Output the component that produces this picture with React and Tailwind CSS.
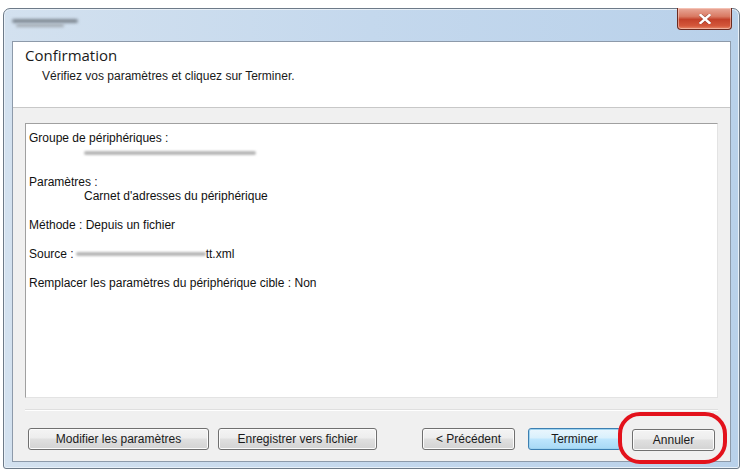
import React from "react";

const font = { fontFamily: "'Liberation Sans', Arial, sans-serif" };

function WinButton({ children, className = "", primary = false }) {
  return (
    <button
      className={`h-[22px] rounded-[3px] border text-[12px] text-[#1a1a1a] ${
        primary
          ? "border-[#3c7fb1] bg-[linear-gradient(#eaf6fd_0%,#d9f0fc_45%,#bee6fd_50%,#a7d9f5_100%)] shadow-[inset_0_0_0_1px_#9ed3f0]"
          : "border-[#707070] bg-[linear-gradient(#f4f4f4_0%,#ededed_45%,#e0e0e0_50%,#d3d3d3_100%)] shadow-[inset_0_0_0_1px_#fcfcfc]"
      } ${className}`}
      style={font}
    >
      {children}
    </button>
  );
}

function Blur({ className }) {
  return <span className={`inline-block h-[4px] rounded-full bg-[#b8b8b8] blur-[1.2px] ${className}`} />;
}

export default function App() {
  return (
    <div className="h-[470px] w-[743px] overflow-hidden bg-white pl-[3px] pt-[8px]">
      <div className="flex h-[461px] w-[737px] flex-col rounded-t-[7px] rounded-b-[3px] border border-[#6d7a88] bg-[linear-gradient(90deg,#d3e1ef_0%,#c4d8ed_50%,#b9d1ea_100%)] shadow-[inset_0_0_0_1px_#e8f0f8]">
        {/* title bar */}
        <div className="relative flex h-[32px] shrink-0 items-start">
          <div className="ml-[8px] mt-[10px] flex flex-col gap-[1px]">
            <span className="h-[4px] w-[66px] rounded-full bg-[#7f8993] blur-[1.5px]" />
            <span className="ml-[4px] h-[3px] w-[48px] rounded-full bg-[#a0a8b0] blur-[1.5px]" />
          </div>
          <div className="absolute right-[7px] top-[-1px] flex h-[22px] w-[55px] items-center justify-center rounded-b-[4px] border border-t-0 border-[#6b2a20] bg-[linear-gradient(#e9a99a_0%,#d97a63_40%,#c4412a_55%,#d4573b_85%,#e88a6a_100%)] shadow-[inset_0_0_0_1px_rgba(255,220,210,0.5)]">
            <svg width="12" height="10" viewBox="0 0 12 10">
              <path d="M1.5 1 L10.5 9 M10.5 1 L1.5 9" stroke="#5a1a12" strokeWidth="3.6" strokeLinecap="square" opacity="0.45" />
              <path d="M1.5 1 L10.5 9 M10.5 1 L1.5 9" stroke="#ffffff" strokeWidth="2.4" strokeLinecap="square" />
            </svg>
          </div>
        </div>

        {/* client area */}
        <div className="mx-[8px] flex h-[421px] flex-col border border-[#8d9aaa] bg-[#f0f0f0]">
          <div className="h-[66px] shrink-0 border-b border-[#c8c8c8] bg-white px-[12px] pt-[3px]" style={font}>
            <div className="text-[15px] leading-[20px] text-[#1a1a1a]" style={{ fontFamily: "'Open Sans', 'Liberation Sans', sans-serif" }}>
              Confirmation
            </div>
            <div className="ml-[17px] mt-[4px] text-[12px] leading-[14px] text-[#1a1a1a]">
              Vérifiez vos paramètres et cliquez sur Terminer.
            </div>
          </div>

          <div className="flex flex-1 flex-col px-[12px] pt-[15px]">
            <div className="h-[275px] border border-t-[#a0a0a0] border-l-[#a0a0a0] border-r-[#e3e3e3] border-b-[#e3e3e3] bg-white px-[3px] pt-[7px] text-[12px] leading-[14.5px] text-[#111]" style={font}>
              <div>Groupe de périphériques :</div>
              <div className="flex h-[14.5px] items-center pl-[55px]">
                <Blur className="w-[172px]" />
              </div>
              <div className="h-[14.5px]" />
              <div>Paramètres :</div>
              <div className="pl-[55px]">Carnet d'adresses du périphérique</div>
              <div className="h-[14.5px]" />
              <div>Méthode : Depuis un fichier</div>
              <div className="h-[14.5px]" />
              <div className="flex items-center">
                <span>Source :</span>
                <Blur className="ml-[2px] w-[130px]" />
                <span>tt.xml</span>
              </div>
              <div className="h-[14.5px]" />
              <div>Remplacer les paramètres du périphérique cible : Non</div>
            </div>

            <div className="mt-[11px] border-t border-[#dfdfdf] shadow-[0_1px_0_#ffffff]" />

            <div className="mt-[16px] flex items-center pl-[3px]">
              <WinButton className="w-[181px]">Modifier les paramètres</WinButton>
              <WinButton className="ml-[9px] w-[159px]">Enregistrer vers fichier</WinButton>
              <WinButton className="ml-[45px] w-[93px]">&lt; Précédent</WinButton>
              <WinButton primary className="ml-[13px] w-[93px]">Terminer</WinButton>
              <div className="relative ml-[11px]">
                <WinButton className="w-[83px]">Annuler</WinButton>
                <div className="pointer-events-none absolute left-[-14px] right-[-12px] top-[-14px] bottom-[-13px] rounded-[22px] border-[4px] border-[#e3121c]" />
              </div>
            </div>
          </div>
        </div>
      </div>
    </div>
  );
}
